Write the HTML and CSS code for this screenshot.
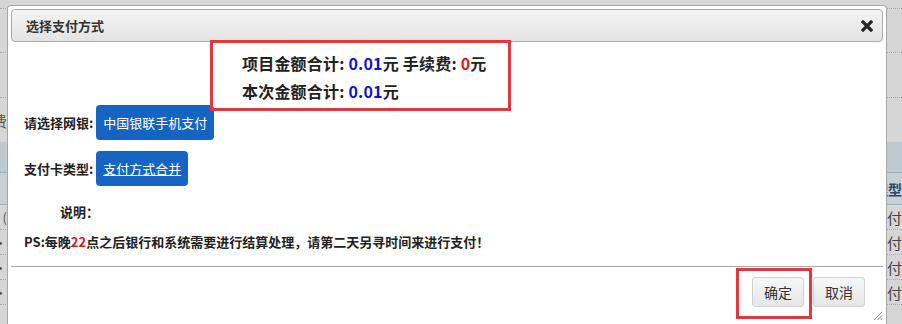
FILE: index.html
```html
<!DOCTYPE html>
<html lang="zh-CN">
<head>
<meta charset="utf-8">
<title>选择支付方式</title>
<link rel="stylesheet" href="styles.css">
</head>
<body>
<div class="page">
  <div class="bg-row r1"><span class="lc"></span><span class="rc"></span></div>
  <div class="bg-row r2"><span class="lc"></span><span class="rc"></span></div>
  <div class="bg-row r3"><span class="lc"></span><span class="rc"></span></div>
  <div class="bg-row r4"><span class="lc">费</span><span class="rc"></span></div>
  <div class="bg-row band"><span class="lc"></span><span class="rc"></span></div>
  <div class="bg-row head"><span class="lc"></span><span class="rc">理型</span></div>
  <div class="bg-row data"><span class="lc">(</span><span class="rc">付</span></div>
  <div class="bg-row data"><span class="lc">·</span><span class="rc">付</span></div>
  <div class="bg-row data"><span class="lc">·</span><span class="rc">付</span></div>
  <div class="bg-row data"><span class="lc">·</span><span class="rc">付</span></div>
</div>

<div class="dialog">
  <div class="titlebar">
    <span class="title">选择支付方式</span>
    <svg class="close" width="12" height="12" viewBox="0 0 12 12"><path d="M2 2 L10 10 M10 2 L2 10" stroke="#262626" stroke-width="3.2" stroke-linecap="square"/></svg>
  </div>
  <div class="content">
    <div class="amounts">
      <div>项目金额合计: <span class="blue">0.01</span>元 手续费: <span class="red">0</span>元</div>
      <div>本次金额合计: <span class="blue">0.01</span>元</div>
    </div>
    <div class="form-row">
      <span class="label">请选择网银:</span>
      <span class="pay-btn">中国银联手机支付</span>
    </div>
    <div class="form-row second">
      <span class="label">支付卡类型:</span>
      <span class="pay-btn link">支付方式合并</span>
    </div>
    <div class="note">说明：</div>
    <div class="ps">PS:每晚<span class="red">22</span>点之后银行和系统需要进行结算处理，请第二天另寻时间来进行支付！</div>
  </div>
  <div class="footer">
    <button class="btn">确定</button>
    <button class="btn">取消</button>
  </div>
  <div class="mark mark-amount"></div>
  <div class="mark mark-ok"></div>
  <svg class="grip" width="10" height="10" viewBox="0 0 10 10"><path d="M9 1 L1 9 M9 4.5 L4.5 9 M9 7.5 L7.5 9" stroke="#888" stroke-width="1"/></svg>
</div>
</body>
</html>
```

FILE: styles.css
```css
html, body {
  margin: 0;
  padding: 0;
}
body {
  width: 902px;
  height: 324px;
  overflow: hidden;
  position: relative;
  background: #d6d6d6;
  font-family: "Noto Sans CJK SC", "Noto Sans", sans-serif;
}

/* background page (behind the modal) */
.page {
  display: flex;
  flex-direction: column;
  height: 324px;
  overflow: hidden;
}
.bg-row {
  display: flex;
  flex-shrink: 0;
  justify-content: space-between;
  border-bottom: 1px dotted #a9a9a9;
  box-sizing: border-box;
  font-size: 15px;
  color: #444;
}
.bg-row .lc,
.bg-row .rc {
  display: flex;
  align-items: center;
  overflow: hidden;
  white-space: nowrap;
}
.bg-row .lc {
  width: 7px;
  justify-content: flex-end;
}
.bg-row .rc {
  width: 15px;
  justify-content: flex-start;
}
.r1 { height: 9px; }
.r2 { height: 44px; }
.r3 { height: 45px; }
.r4 { height: 44px; border-bottom: none; }
.r4 .lc { color: #555; }
.band {
  height: 31px;
  background: #bec9d1;
  border-bottom: 1px solid #9fb0bd;
}
.head {
  height: 32px;
  background: #c6d0d8;
  border-bottom: 1px solid #9fb0bd;
}
.head .rc {
  justify-content: flex-end;
  color: #2d4a66;
  font-size: 14px;
  font-weight: bold;
}
.head .lc { background: #c6d0d8; }
.data {
  height: 25px;
}
.data .rc { justify-content: flex-start; padding-left: 1px; }
.data .lc { color: #555; font-size: 13px; }

/* dialog */
.dialog {
  position: absolute;
  left: 7px;
  top: 5px;
  width: 880px;
  height: 319px;
  box-sizing: border-box;
  background: #fff;
  border: 1px solid #a8a8a8;
  border-bottom: none;
  border-radius: 4px 4px 0 0;
  padding: 3px;
  overflow: hidden;
}
.titlebar {
  height: 33px;
  box-sizing: border-box;
  border: 1px solid #aaa;
  border-radius: 4px;
  background: linear-gradient(#f4f4f4, #e3e3e3);
  display: flex;
  align-items: center;
  justify-content: space-between;
  padding: 0 9px 0 14px;
}
.title {
  font-size: 13px;
  font-weight: bold;
  color: #333;
}
.close { display: block; }

.content {
  padding-left: 13px;
  color: #222;
}
.amounts {
  margin: 7px 0 0 218px;
  font-size: 16px;
  font-weight: bold;
  line-height: 28px;
  letter-spacing: 0.2px;
}
.blue { color: #0a14d6; }
.red { color: #e3141c; }

.form-row {
  display: flex;
  align-items: center;
  gap: 3px;
  height: 35px;
}
.form-row.second { margin-top: 11px; }
.label {
  font-size: 13px;
  font-weight: bold;
}
.pay-btn {
  height: 35px;
  box-sizing: border-box;
  padding: 0 7px;
  display: flex;
  align-items: center;
  background: #1664c2;
  color: #fff;
  border-radius: 4px;
  font-size: 13px;
}
.pay-btn.link { text-decoration: underline; }

.note {
  margin: 16px 0 0 36px;
  font-size: 13px;
  font-weight: bold;
  line-height: 20px;
}
.ps {
  margin-top: 10px;
  font-size: 13px;
  font-weight: bold;
  line-height: 20px;
}
.footer {
  margin-top: 14px;
  border-top: 1px solid #a9a9a9;
  padding: 10px 18px 0 0;
  display: flex;
  justify-content: flex-end;
  gap: 9px;
}
.btn {
  height: 30px;
  padding: 0 11px;
  font-family: "Noto Sans CJK SC", "Noto Sans", sans-serif;
  font-size: 14px;
  color: #333;
  background: linear-gradient(#f7f7f7, #e6e6e6);
  border: 1px solid #d0d0d0;
  border-radius: 3px;
}

.mark {
  position: absolute;
  border: 3px solid #e5363b;
  box-sizing: border-box;
}
.mark-amount {
  left: 202px;
  top: 34px;
  width: 301px;
  height: 71px;
}
.mark-ok {
  left: 728px;
  top: 262px;
  width: 76px;
  height: 51px;
}
.grip {
  position: absolute;
  left: 865px;
  top: 305px;
}
```
